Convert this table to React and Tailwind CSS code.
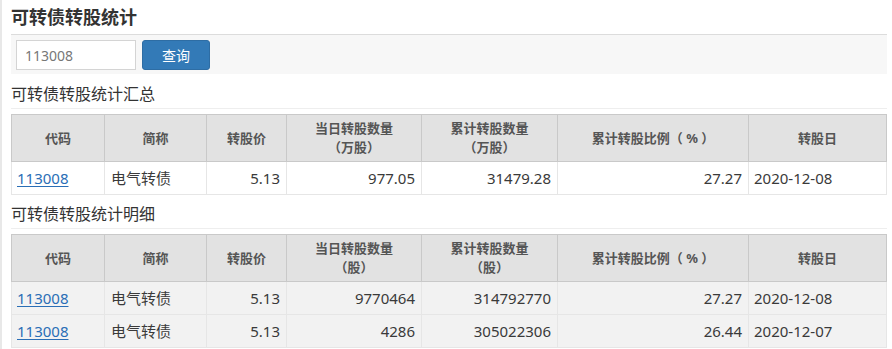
import React from "react";

const font = { fontFamily: '"Noto Sans", "Noto Sans CJK SC", sans-serif' };

const widths = ["w-[93px]", "w-[102px]", "w-[80px]", "w-[135px]", "w-[136px]", "w-[191px]", "w-[138px]"];

function Table({ unit, rows, striped }) {
  const heads = [
    ["代码"],
    ["简称"],
    ["转股价"],
    ["当日转股数量", `（${unit}）`],
    ["累计转股数量", `（${unit}）`],
    ["累计转股比例（ % ）"],
    ["转股日"],
  ];
  return (
    <table className="border-collapse table-fixed w-[876px] text-[#333]">
      <colgroup>
        {widths.map((w, i) => (
          <col key={i} className={w} />
        ))}
      </colgroup>
      <thead>
        <tr className="h-[47px] bg-[#e2e2e2]">
          {heads.map((h, i) => (
            <th
              key={i}
              className="border border-[#c9c9c9] text-[13px] font-bold text-[#555] text-center leading-[19px] p-0 align-middle"
            >
              {h.map((t, j) => (
                <div key={j}>{t}</div>
              ))}
            </th>
          ))}
        </tr>
      </thead>
      <tbody>
        {rows.map((r, i) => (
          <tr key={i} className={`h-[33px] ${striped ? "bg-[#f2f2f2]" : "bg-white"} text-[15px] text-[#3a3a3a]`}>
            <td className="border border-[#e6e6e6] px-[5px] py-0">
              <a className="text-[#2a6eb6] underline underline-offset-2">{r[0]}</a>
            </td>
            <td className="border border-[#e6e6e6] px-[6px] py-0">{r[1]}</td>
            <td className="border border-[#e6e6e6] px-[6px] py-0 text-right">{r[2]}</td>
            <td className="border border-[#e6e6e6] px-[6px] py-0 text-right">{r[3]}</td>
            <td className="border border-[#e6e6e6] px-[6px] py-0 text-right">{r[4]}</td>
            <td className="border border-[#e6e6e6] px-[6px] py-0 text-right">{r[5]}</td>
            <td className="border border-[#e6e6e6] px-[5px] py-0">{r[6]}</td>
          </tr>
        ))}
      </tbody>
    </table>
  );
}

export default function App() {
  return (
    <div style={font} className="w-[892px] h-[349px] overflow-hidden bg-white border-l-2 border-[#e8e8e8] pl-[9px] text-[#333]">
      <div className="w-[876px]">
        <div className="h-[35px] border-b border-[#dcdcdc] flex items-start pt-[4px]">
          <h1 className="text-[18px] font-bold leading-[26px] text-[#333]">可转债转股统计</h1>
        </div>
        <div className="h-[39px] bg-[#f7f7f7] flex items-start pt-[5px] pl-[5px] gap-[6px]">
          <div className="w-[120px] h-[30px] bg-white border border-[#d4d4d4] flex items-center px-[8px] text-[14px] text-[#777]">
            113008
          </div>
          <button className="w-[68px] h-[30px] bg-[#337ab7] border border-[#2e6da4] rounded-[3px] text-white text-[14px] flex items-center justify-center">
            查询
          </button>
        </div>
        <div className="h-[35px] border-b border-[#eeeeee] flex items-start pt-[9px]">
          <h2 className="text-[16px] leading-[22px] font-normal text-[#333]">可转债转股统计汇总</h2>
        </div>
        <div className="pt-[5px]">
          <Table
            unit="万股"
            rows={[["113008", "电气转债", "5.13", "977.05", "31479.28", "27.27", "2020-12-08"]]}
          />
        </div>
        <div className="h-[34px] border-b border-[#eeeeee] flex items-start pt-[8px]">
          <h2 className="text-[16px] leading-[22px] font-normal text-[#333]">可转债转股统计明细</h2>
        </div>
        <div className="pt-[5px]">
          <Table
            unit="股"
            striped
            rows={[
              ["113008", "电气转债", "5.13", "9770464", "314792770", "27.27", "2020-12-08"],
              ["113008", "电气转债", "5.13", "4286", "305022306", "26.44", "2020-12-07"],
            ]}
          />
        </div>
      </div>
    </div>
  );
}
